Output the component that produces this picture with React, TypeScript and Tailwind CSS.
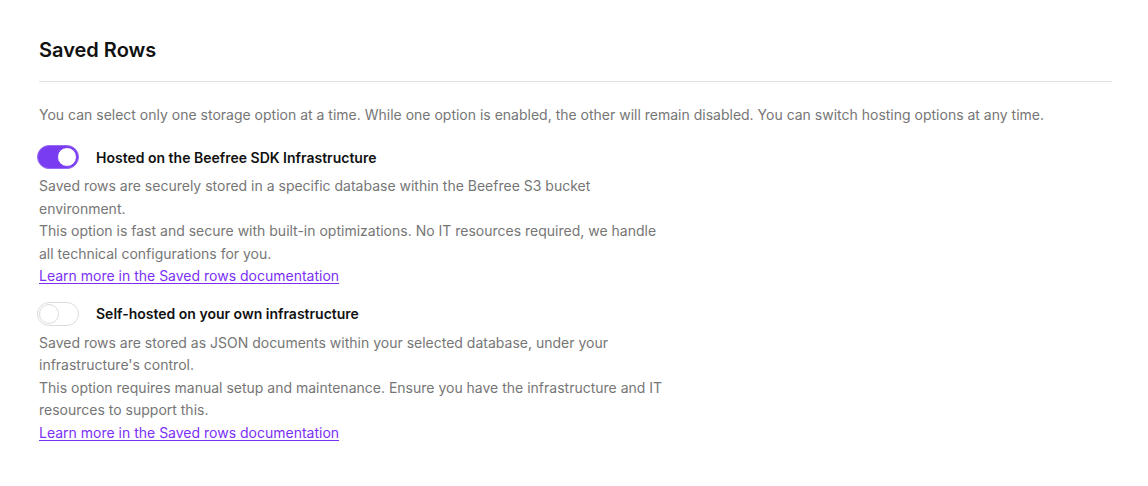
import React from 'react';

interface OptionProps {
    enabled: boolean;
    title: string;
    lines: string[];
    onToggle: () => void;
}

const Toggle: React.FC<{ on: boolean; onClick: () => void }> = ({ on, onClick }) => (
    <button
        type="button"
        onClick={onClick}
        className={`relative -ml-[2px] w-[42px] h-[24px] rounded-full shrink-0 border ${
            on ? 'bg-[#7a3cf1] border-[#9a6cf5]' : 'bg-white border-[#dcdcdc]'
        }`}
    >
        <span
            className={`absolute top-[1px] w-[20px] h-[20px] rounded-full bg-white border ${
                on ? 'left-[19px] border-[#7a3cf1]' : 'left-[1px] border-[#dcdcdc]'
            }`}
        />
    </button>
);

const Option: React.FC<OptionProps> = ({ enabled, title, lines, onToggle }) => (
    <div>
        <div className="flex items-center gap-[17px] h-[24px]">
            <Toggle on={enabled} onClick={onToggle} />
            <span className="text-[14px] font-semibold text-[#111111]">{title}</span>
        </div>
        <div className="mt-[6px] max-w-[630px] text-[14px] leading-[22.5px] text-[#767676]">
            {lines.map((l, i) => (
                <p key={i}>{l}</p>
            ))}
            <a href="#" className="text-[#7b2ff7] underline underline-offset-2">
                Learn more in the Saved rows documentation
            </a>
        </div>
    </div>
);

export default function App() {
    const [hosted, setHosted] = React.useState(true);

    return (
        <div className="min-h-[486px] bg-white pl-[39px] pr-[36px] pt-[36px]" style={{ fontFamily: 'Inter, "Noto Sans", sans-serif' }}>
            <h1 className="text-[20px] font-semibold text-[#111111] leading-[28px]">Saved Rows</h1>
            <div className="mt-[17px] border-t border-[#e2e2e2]" />
            <p className="mt-[22px] text-[14px] leading-[22px] text-[#767676]">
                You can select only one storage option at a time. While one option is enabled, the other will remain disabled. You can switch hosting options at any time.
            </p>
            <div className="mt-[19px] flex flex-col gap-[14px]">
                <Option
                    enabled={hosted}
                    onToggle={() => setHosted(!hosted)}
                    title="Hosted on the Beefree SDK Infrastructure"
                    lines={[
                        'Saved rows are securely stored in a specific database within the Beefree S3 bucket environment.',
                        'This option is fast and secure with built-in optimizations. No IT resources required, we handle all technical configurations for you.',
                    ]}
                />
                <Option
                    enabled={!hosted}
                    onToggle={() => setHosted(!hosted)}
                    title="Self-hosted on your own infrastructure"
                    lines={[
                        "Saved rows are stored as JSON documents within your selected database, under your infrastructure's control.",
                        'This option requires manual setup and maintenance. Ensure you have the infrastructure and IT resources to support this.',
                    ]}
                />
            </div>
        </div>
    );
}
